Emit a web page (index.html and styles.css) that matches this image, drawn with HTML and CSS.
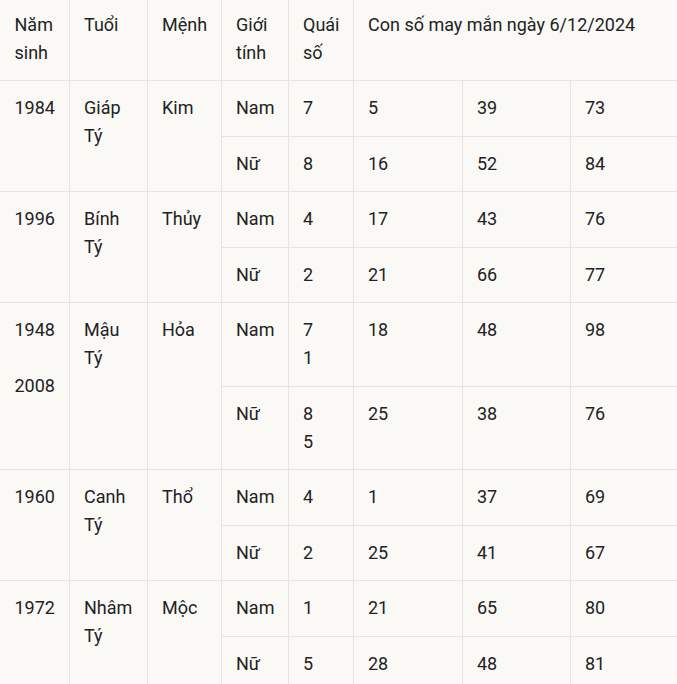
FILE: index.html
```html
<!DOCTYPE html>
<html lang="vi">
<head>
<meta charset="utf-8">
<link rel="stylesheet" href="styles.css">
</head>
<body>
<table class="lucky">
  <colgroup>
    <col class="c1"><col class="c2"><col class="c3"><col class="c4"><col class="c5"><col class="c6"><col class="c7"><col class="c8">
  </colgroup>
  <thead>
    <tr>
      <th>Năm sinh</th>
      <th>Tuổi</th>
      <th>Mệnh</th>
      <th>Giới tính</th>
      <th>Quái số</th>
      <th colspan="3">Con số may mắn ngày 6/12/2024</th>
    </tr>
  </thead>
  <tbody>
    <tr>
      <td rowspan="2">1984</td>
      <td rowspan="2">Giáp Tý</td>
      <td rowspan="2">Kim</td>
      <td>Nam</td><td>7</td><td>5</td><td>39</td><td>73</td>
    </tr>
    <tr>
      <td>Nữ</td><td>8</td><td>16</td><td>52</td><td>84</td>
    </tr>
    <tr>
      <td rowspan="2">1996</td>
      <td rowspan="2">Bính Tý</td>
      <td rowspan="2">Thủy</td>
      <td>Nam</td><td>4</td><td>17</td><td>43</td><td>76</td>
    </tr>
    <tr>
      <td>Nữ</td><td>2</td><td>21</td><td>66</td><td>77</td>
    </tr>
    <tr>
      <td rowspan="2">1948<br><br>2008</td>
      <td rowspan="2">Mậu Tý</td>
      <td rowspan="2">Hỏa</td>
      <td>Nam</td><td>7<br>1</td><td>18</td><td>48</td><td>98</td>
    </tr>
    <tr>
      <td>Nữ</td><td>8<br>5</td><td>25</td><td>38</td><td>76</td>
    </tr>
    <tr>
      <td rowspan="2">1960</td>
      <td rowspan="2">Canh Tý</td>
      <td rowspan="2">Thổ</td>
      <td>Nam</td><td>4</td><td>1</td><td>37</td><td>69</td>
    </tr>
    <tr>
      <td>Nữ</td><td>2</td><td>25</td><td>41</td><td>67</td>
    </tr>
    <tr>
      <td rowspan="2">1972</td>
      <td rowspan="2">Nhâm Tý</td>
      <td rowspan="2">Mộc</td>
      <td>Nam</td><td>1</td><td>21</td><td>65</td><td>80</td>
    </tr>
    <tr>
      <td>Nữ</td><td>5</td><td>28</td><td>48</td><td>81</td>
    </tr>
  </tbody>
</table>
</body>
</html>
```

FILE: styles.css
```css
html, body {
  margin: 0;
  padding: 0;
  background: #faf9f6;
}
body {
  overflow: hidden;
}
.lucky {
  border-collapse: collapse;
  border-style: hidden;
  table-layout: fixed;
  width: 678px;
  margin-top: -2.5px;
  font-family: Roboto, "Liberation Sans", sans-serif;
  font-size: 18px;
  line-height: 28px;
  color: #222;
}
.lucky th,
.lucky td {
  border: 1px solid #e6e4e0;
  padding: 13.25px 14px 13.25px 14.5px;
  text-align: left;
  vertical-align: top;
  font-weight: 400;
}
.c1 { width: 69px; }
.c2 { width: 78px; }
.c3 { width: 74px; }
.c4 { width: 67px; }
.c5 { width: 65px; }
.c6 { width: 109px; }
.c7 { width: 108px; }
.c8 { width: 108px; }
```
